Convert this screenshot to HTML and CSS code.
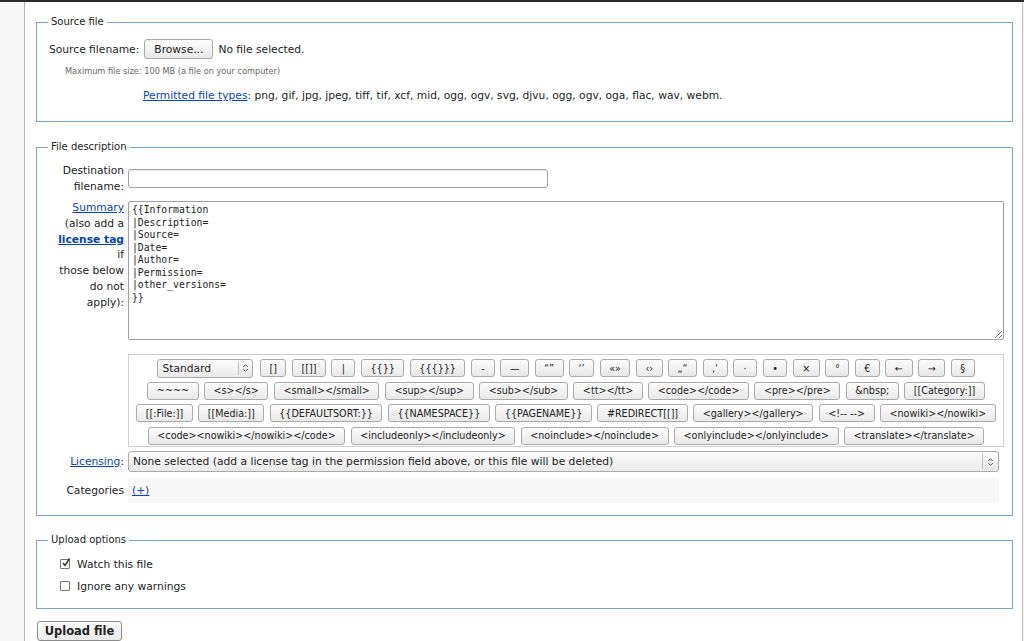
FILE: index.html
```html
<!DOCTYPE html>
<html lang="en">
<head>
<meta charset="utf-8">
<title>Upload file</title>
<link rel="stylesheet" href="styles.css">
</head>
<body>
<div class="topbar"></div>
<div class="page">
  <div class="sidebar"></div>
  <main class="content">
    <form class="upload">
      <fieldset class="box box-source">
        <legend>Source file</legend>
        <div class="srcrow">
          <label class="srclabel">Source filename:</label>
          <button type="button" class="btn btn-browse">Browse...</button>
          <span>No file selected.</span>
        </div>
        <div class="maxsize">Maximum file size: 100 MB (a file on your computer)</div>
        <div class="permitted"><a href="#">Permitted file types</a>: png, gif, jpg, jpeg, tiff, tif, xcf, mid, ogg, ogv, svg, djvu, ogg, ogv, oga, flac, wav, webm.</div>
      </fieldset>

      <fieldset class="box box-desc">
        <legend>File description</legend>
        <div class="row row-dest">
          <label class="lbl">Destination filename:</label>
          <input type="text" class="textinput">
        </div>
        <div class="row row-summary">
          <label class="lbl lbl-summary"><a href="#">Summary</a><br>(also add a<br><a href="#" class="strong">license tag</a><br>if<br>those below<br>do not<br>apply):</label>
          <textarea class="summary" spellcheck="false">{{Information
|Description=
|Source=
|Date=
|Author=
|Permission=
|other_versions=
}}</textarea>
        </div>
        <div class="row row-tools">
          <div></div>
          <div class="edittools">
            <div class="toolrow">
              <span class="selectwrap selectwrap-small">
                <select class="sel sel-small"><option>Standard</option></select>
                <span class="selsep"></span>
                <svg class="selarrow" width="7" height="10" viewBox="0 0 7 10"><path d="M1.2 4 L3.5 1.7 L5.8 4 M1.2 6 L3.5 8.3 L5.8 6" fill="none" stroke="#444" stroke-width="1"/></svg>
              </span>
              <button type="button" class="tb">[]</button>
              <button type="button" class="tb">[[]]</button>
              <button type="button" class="tb">|</button>
              <button type="button" class="tb">{{}}</button>
              <button type="button" class="tb">{{{}}}</button>
              <button type="button" class="tb">-</button>
              <button type="button" class="tb">—</button>
              <button type="button" class="tb">“”</button>
              <button type="button" class="tb">‘’</button>
              <button type="button" class="tb">«»</button>
              <button type="button" class="tb">‹›</button>
              <button type="button" class="tb">„“</button>
              <button type="button" class="tb">‚‘</button>
              <button type="button" class="tb">·</button>
              <button type="button" class="tb">•</button>
              <button type="button" class="tb">×</button>
              <button type="button" class="tb">°</button>
              <button type="button" class="tb">€</button>
              <button type="button" class="tb">←</button>
              <button type="button" class="tb">→</button>
              <button type="button" class="tb">§</button>
            </div>
            <div class="toolrow">
              <button type="button" class="tb">~~~~</button>
              <button type="button" class="tb">&lt;s&gt;&lt;/s&gt;</button>
              <button type="button" class="tb">&lt;small&gt;&lt;/small&gt;</button>
              <button type="button" class="tb">&lt;sup&gt;&lt;/sup&gt;</button>
              <button type="button" class="tb">&lt;sub&gt;&lt;/sub&gt;</button>
              <button type="button" class="tb">&lt;tt&gt;&lt;/tt&gt;</button>
              <button type="button" class="tb">&lt;code&gt;&lt;/code&gt;</button>
              <button type="button" class="tb">&lt;pre&gt;&lt;/pre&gt;</button>
              <button type="button" class="tb">&amp;nbsp;</button>
              <button type="button" class="tb">[[Category:]]</button>
            </div>
            <div class="toolrow">
              <button type="button" class="tb">[[:File:]]</button>
              <button type="button" class="tb">[[Media:]]</button>
              <button type="button" class="tb">{{DEFAULTSORT:}}</button>
              <button type="button" class="tb">{{NAMESPACE}}</button>
              <button type="button" class="tb">{{PAGENAME}}</button>
              <button type="button" class="tb">#REDIRECT[[]]</button>
              <button type="button" class="tb">&lt;gallery&gt;&lt;/gallery&gt;</button>
              <button type="button" class="tb">&lt;!-- --&gt;</button>
              <button type="button" class="tb">&lt;nowiki&gt;&lt;/nowiki&gt;</button>
            </div>
            <div class="toolrow">
              <button type="button" class="tb">&lt;code&gt;&lt;nowiki&gt;&lt;/nowiki&gt;&lt;/code&gt;</button>
              <button type="button" class="tb">&lt;includeonly&gt;&lt;/includeonly&gt;</button>
              <button type="button" class="tb">&lt;noinclude&gt;&lt;/noinclude&gt;</button>
              <button type="button" class="tb">&lt;onlyinclude&gt;&lt;/onlyinclude&gt;</button>
              <button type="button" class="tb">&lt;translate&gt;&lt;/translate&gt;</button>
            </div>
          </div>
        </div>
        <div class="row row-license">
          <label class="lbl"><a href="#">Licensing</a>:</label>
          <span class="selectwrap selectwrap-wide">
            <select class="sel sel-wide"><option>None selected (add a license tag in the permission field above, or this file will be deleted)</option></select>
            <span class="selsep"></span>
            <svg class="selarrow" width="7" height="10" viewBox="0 0 7 10"><path d="M1.2 4 L3.5 1.7 L5.8 4 M1.2 6 L3.5 8.3 L5.8 6" fill="none" stroke="#444" stroke-width="1"/></svg>
          </span>
        </div>
        <div class="row row-cats">
          <label class="lbl">Categories</label>
          <div class="catbar"><a href="#">(+)</a></div>
        </div>
      </fieldset>

      <fieldset class="box box-options">
        <legend>Upload options</legend>
        <label class="check check-first">
          <span class="cbox"><svg width="10" height="11" viewBox="0 0 10 11"><path d="M2 6 L4 8.5 L8.5 1.5" fill="none" stroke="#333" stroke-width="1.4"/></svg></span>
          <span>Watch this file</span>
        </label>
        <label class="check">
          <span class="cbox"></span>
          <span>Ignore any warnings</span>
        </label>
      </fieldset>

      <button type="button" class="btn btn-upload">Upload file</button>
    </form>
  </main>
  <div class="rightedge"></div>
</div>
</body>
</html>
```

FILE: styles.css
```css
* { box-sizing: border-box; }
html, body { margin: 0; padding: 0; }
body {
  font-family: "DejaVu Sans", "Noto Sans", sans-serif;
  font-size: 10.7px;
  color: #222;
  background: #fff;
  height: 641px;
  overflow: hidden;
}
a { color: #0645ad; text-decoration: underline; }
a.strong { font-weight: bold; }

.topbar { height: 2px; background: #2b2b2b; }
.page { display: flex; height: 639px; }
.sidebar { width: 25px; background: #f6f6f6; border-right: 1px solid #b5b5b5; flex: none; }
.content { flex: 1; padding: 12px 9px 0 11px; min-width: 0; }
.rightedge { width: 2px; flex: none; background: #efefef; border-left: 1px solid #c4c4c4; }

.box {
  border: 1px solid #7ea1d0;
  margin: 0;
  padding: 0 8px 0 12px;
  min-width: 0;
}
.box legend {
  font-size: 10px;
  line-height: 16px;
  padding: 0 3px;
  margin-left: -1px;
  color: #222;
}

/* Source file */
.box-source { padding-bottom: 18px; }
.srcrow { display: flex; align-items: center; gap: 5px; margin-top: 9px; height: 20px; }
.maxsize { font-size: 8.2px; line-height: 12px; color: #666; padding-left: 16px; margin-top: 6px; }
.permitted { line-height: 14px; padding-left: 94px; margin-top: 12px; }

.btn {
  font-family: inherit;
  font-size: 10.7px;
  color: #222;
  height: 20px;
  padding: 0 8px;
  border: 1px solid #a9a9a9;
  border-radius: 3px;
  background: linear-gradient(#fdfdfd, #e9e9e9);
}
.btn-browse { padding: 0 9px; }

/* File description */
.box-desc { margin-top: 17px; padding-bottom: 12px; }
.row { display: grid; grid-template-columns: 75px 1fr; column-gap: 4px; }
.lbl { text-align: right; line-height: 15.5px; }
.row-dest { margin-top: 8px; align-items: center; }
.textinput {
  width: 420px;
  height: 19px;
  border: 1px solid #a0a0a0;
  border-radius: 3px;
  box-shadow: inset 0 1px 1px rgba(0,0,0,0.08);
  font-family: inherit;
  font-size: 10.7px;
}
.row-summary { margin-top: 6px; }
.lbl-summary { line-height: 15.8px; }
.summary {
  display: block;
  margin-top: 1px;
  width: 100%;
  height: 139px;
  border: 1px solid #a0a0a0;
  border-radius: 2px;
  padding: 2px 3px;
  font-family: "DejaVu Sans Mono", monospace;
  font-size: 9.75px;
  line-height: 12.5px;
  color: #222;
}

.row-tools { margin-top: 14px; }
.edittools {
  height: 93px;
  border: 1px solid #cfcfcf;
  padding: 4px 2px;
  display: flex;
  flex-direction: column;
  gap: 4.5px;
}
.toolrow { display: flex; justify-content: center; gap: 5.5px; height: 18px; align-items: center; }
.tb {
  font-family: inherit;
  font-size: 9.6px;
  color: #222;
  height: 18px;
  min-width: 24px;
  padding: 0 8.5px;
  border: 1px solid #aaa;
  border-radius: 3px;
  background: linear-gradient(#fcfcfc, #e8e8e8);
  white-space: nowrap;
}

.selectwrap { position: relative; display: inline-block; }
.sel {
  appearance: none;
  -webkit-appearance: none;
  font-family: inherit;
  color: #222;
  border: 1px solid #a9a9a9;
  border-radius: 3px;
  background: linear-gradient(#fdfdfd, #e9e9e9);
  display: block;
}
.sel-small { width: 96px; height: 19px; font-size: 10.7px; padding: 0 0 0 4px; margin-right: 1px; }
.sel-wide { width: 100%; height: 21px; font-size: 10.7px; padding: 0 0 0 4px; }
.selsep { position: absolute; top: 3px; bottom: 3px; width: 1px; background: #bdbdbd; }
.selarrow { position: absolute; top: 50%; margin-top: -5px; }
.selectwrap-small .selsep { right: 15px; }
.selectwrap-small .selarrow { right: 5px; }
.selectwrap-wide { display: block; margin-right: 5px; }
.selectwrap-wide .selsep { right: 16px; }
.selectwrap-wide .selarrow { right: 5px; }

.row-license { margin-top: 4px; align-items: center; }
.row-cats { margin-top: 6px; align-items: center; }
.catbar { height: 25px; background: #f7f7f7; margin-right: 5px; padding-left: 4px; display: flex; align-items: center; }

/* Upload options */
.box-options { margin-top: 16px; padding-bottom: 13px; }
.check { display: flex; align-items: center; gap: 7px; padding-left: 11px; height: 18px; margin-top: 4px; }
.check-first { margin-top: 7px; }
.cbox {
  width: 10px; height: 10px;
  border: 1px solid #777;
  border-radius: 1px;
  background: #fff;
  position: relative;
  flex: none;
}
.cbox svg { position: absolute; left: 0; top: -3px; }

.btn-upload {
  margin-top: 12px;
  margin-left: 1px;
  height: 20px;
  width: 85px;
  padding: 0;
  font-weight: bold;
  font-size: 11.5px;
  border-color: #8c8c8c;
}
```
